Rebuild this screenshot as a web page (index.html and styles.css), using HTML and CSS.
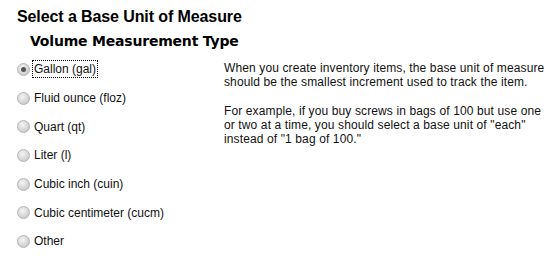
FILE: index.html
```html
<!DOCTYPE html>
<html lang="en">
<head>
  <meta charset="UTF-8" />
  <title>Select a Base Unit of Measure</title>
  <link rel="stylesheet" href="styles.css">
</head>
<body>
<div class="page">
  <h1>Select a Base Unit of Measure</h1>
  <h2>Volume Measurement Type</h2>

  <div class="columns">
    <div class="units">
      <label class="unit"><input type="radio" name="unit" checked><span class="focus">Gallon (gal)</span></label>
      <label class="unit"><input type="radio" name="unit"><span>Fluid ounce (floz)</span></label>
      <label class="unit"><input type="radio" name="unit"><span>Quart (qt)</span></label>
      <label class="unit"><input type="radio" name="unit"><span>Liter (l)</span></label>
      <label class="unit"><input type="radio" name="unit"><span>Cubic inch (cuin)</span></label>
      <label class="unit"><input type="radio" name="unit"><span>Cubic centimeter (cucm)</span></label>
      <label class="unit"><input type="radio" name="unit"><span>Other</span></label>
    </div>

    <div class="help">
      <p>When you create inventory items, the base unit of measure should be the smallest increment used to track the item.</p>
      <p>For example, if you buy screws in bags of 100 but use one or two at a time, you should select a base unit of "each" instead of "1 bag of 100."</p>
    </div>
  </div>
</div>
</body>
</html>
```

FILE: styles.css
```css
body {
  margin: 0;
  background: #fff;
  font-family: 'Liberation Sans', Arial, sans-serif;
  color: #000;
}

.page {
  padding: 8px 0 0 17px;
}

h1 {
  margin: 0;
  font-size: 16px;
  font-weight: bold;
  line-height: 18px;
  letter-spacing: -0.1px;
}

h2 {
  margin: 6px 0 0 13px;
  font-family: 'DejaVu Sans', Verdana, sans-serif;
  font-size: 14px;
  font-weight: bold;
  line-height: 18px;
  letter-spacing: -0.2px;
}

.columns {
  display: flex;
  margin-top: 5px;
}

.units {
  width: 207px;
  display: flex;
  flex-direction: column;
}

.unit {
  display: flex;
  align-items: center;
  height: 28.7px;
  font-size: 12px;
  color: #111;
}

.unit input {
  appearance: none;
  -webkit-appearance: none;
  width: 13px;
  height: 13px;
  margin: 0 2px 0 0;
  border-radius: 50%;
  border: 1px solid #b4b4b4;
  background: radial-gradient(circle at 40% 35%, #f4f4f4, #cfcfcf 70%, #bdbdbd);
  box-sizing: border-box;
  position: relative;
}

.unit input:checked::after {
  content: "";
  position: absolute;
  left: 3px;
  top: 3px;
  width: 5px;
  height: 5px;
  border-radius: 50%;
  background: #555;
}

.unit span {
  padding: 1px 1px;
  border: 1px dotted transparent;
}

.unit .focus {
  border-color: #000;
}

.help {
  width: 326px;
  padding-top: 7px;
  font-size: 12px;
  line-height: 13.7px;
  letter-spacing: 0.12px;
  color: #111;
}

.help p {
  margin: 0 0 16px 0;
}
```
